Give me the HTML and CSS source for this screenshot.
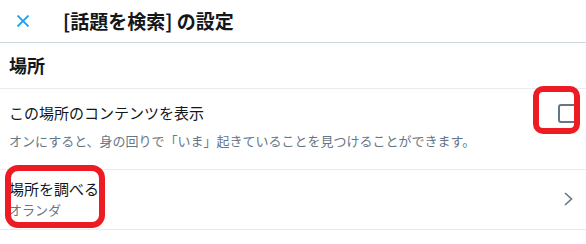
FILE: index.html
```html
<!DOCTYPE html>
<html lang="ja">
<head>
    <meta charset="UTF-8">
    <meta name="viewport" content="width=device-width, initial-scale=1.0">
    <title>[話題を検索] の設定</title>
    <link rel="stylesheet" href="styles.css">
</head>
<body>
    <div class="header">
        <button class="close" aria-label="閉じる">
            <svg width="14" height="12" viewBox="0 0 14 12">
                <path d="M1.5 0.5 L12.5 11.5 M12.5 0.5 L1.5 11.5" stroke="#1da1f2" stroke-width="1.8" fill="none"/>
            </svg>
        </button>
        <h1 class="title">[話題を検索] の設定</h1>
    </div>

    <div class="section">場所</div>

    <div class="row toggle-row">
        <div class="row-text">
            <div class="row-title">この場所のコンテンツを表示</div>
            <div class="row-desc">オンにすると、身の回りで「いま」起きていることを見つけることができます。</div>
        </div>
        <span class="checkbox"></span>
        <span class="mark mark-check"></span>
    </div>

    <div class="row link-row">
        <div class="row-text">
            <div class="row-title">場所を調べる</div>
            <div class="row-sub">オランダ</div>
        </div>
        <svg class="chevron" width="9" height="14" viewBox="0 0 9 14">
            <path d="M1 1 L7.5 7 L1 13" stroke="#657786" stroke-width="1.6" fill="none"/>
        </svg>
        <span class="mark mark-link"></span>
    </div>
</body>
</html>
```

FILE: styles.css
```css
body {
    margin: 0;
    background: #fff;
    color: #14171a;
    font-family: "Noto Sans CJK JP", "Noto Sans", sans-serif;
}

.header {
    display: flex;
    align-items: center;
    height: 42px;
    border-bottom: 1px solid #ccd6dd;
}

.close {
    background: none;
    border: none;
    padding: 0;
    margin-left: 16px;
    width: 14px;
    height: 12px;
    display: flex;
}

.title {
    margin: 0 0 0 33px;
    font-size: 19px;
    line-height: 24px;
    font-weight: bold;
}

.section {
    font-size: 18px;
    line-height: 24px;
    font-weight: bold;
    padding: 10px 9px 11px;
    border-bottom: 1px solid #e6ecf0;
}

.row {
    position: relative;
    display: flex;
    border-bottom: 1px solid #e6ecf0;
    padding-left: 9px;
}

.row-title {
    font-size: 15px;
    line-height: 20px;
}

.row-desc,
.row-sub {
    font-size: 13px;
    line-height: 18px;
    color: #657786;
}

.toggle-row {
    align-items: flex-start;
    padding-top: 14px;
    padding-bottom: 19px;
}

.toggle-row .row-desc {
    margin-top: 9px;
}

.row-text {
    flex: 1;
}

.checkbox {
    width: 15px;
    height: 15px;
    border: 2px solid #657786;
    border-radius: 3px;
    margin: 1px 9px 0 0;
}

.link-row {
    align-items: center;
    padding-top: 9px;
    padding-bottom: 10px;
}

.link-row .row-sub {
    margin-top: 2px;
}

.chevron {
    margin-right: 13px;
}

/* red annotation frames */
.mark {
    position: absolute;
    border: 6px solid #ed1c24;
    box-sizing: border-box;
}

.mark-check {
    left: 533px;
    top: -3px;
    width: 47px;
    height: 48px;
    border-radius: 10px;
}

.mark-link {
    left: 5px;
    top: -5px;
    width: 100px;
    height: 63px;
    border-radius: 13px;
}
```
